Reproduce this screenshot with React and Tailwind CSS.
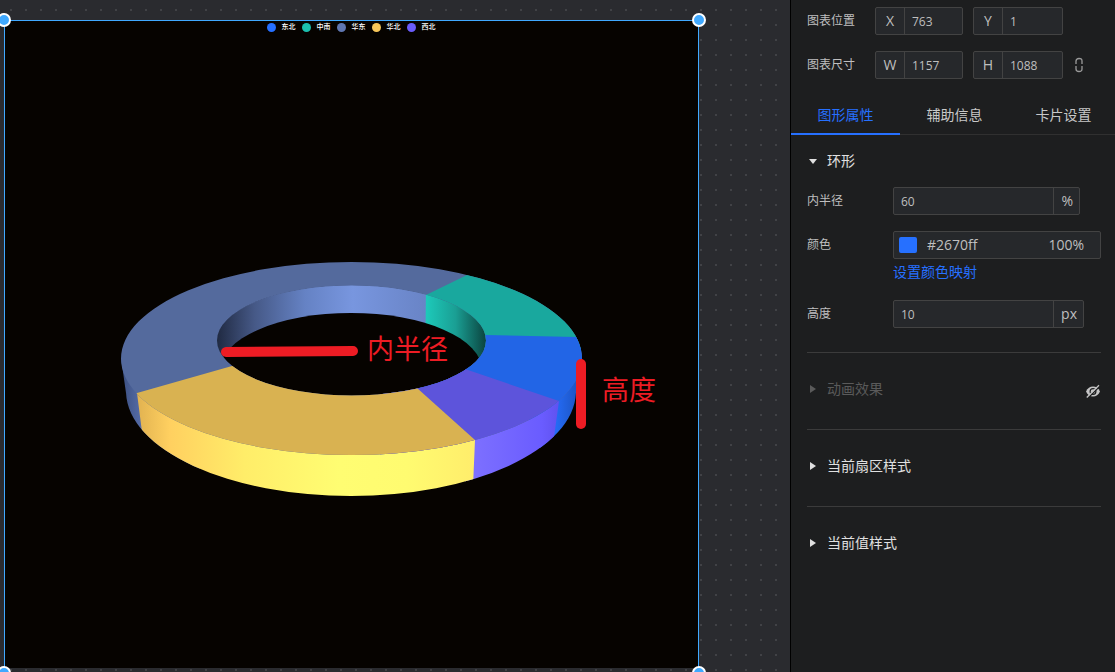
const legend = [
  { name: '东北', dot: 'bg-[#2670ff]' },
  { name: '中南', dot: 'bg-[#1bbfae]' },
  { name: '华东', dot: 'bg-[#5f76b0]' },
  { name: '华北', dot: 'bg-[#f6c659]' },
  { name: '西北', dot: 'bg-[#6a5cf9]' },
];

const tabs = ['图形属性', '辅助信息', '卡片设置'];

const RingChart = () => (
  <svg className="w-full h-auto block" viewBox="0 0 693 650" role="img" aria-label="环形图">
    <defs>
      <linearGradient id="slateOuter" gradientUnits="userSpaceOnUse" x1="121" y1="0" x2="142" y2="0">
        <stop offset="0" stopColor="#3b4f80" />
        <stop offset="1" stopColor="#566da8" />
      </linearGradient>
      <linearGradient id="yellowOuter" gradientUnits="userSpaceOnUse" x1="136" y1="0" x2="475" y2="0">
        <stop offset="0" stopColor="#e0b150" />
        <stop offset="0.1" stopColor="#ffd060" />
        <stop offset="0.32" stopColor="#ffed69" />
        <stop offset="0.6" stopColor="#fffd72" />
        <stop offset="0.8" stopColor="#fffb70" />
        <stop offset="1" stopColor="#ffed6b" />
      </linearGradient>
      <linearGradient id="purpleOuter" gradientUnits="userSpaceOnUse" x1="473" y1="0" x2="559" y2="0">
        <stop offset="0" stopColor="#7d70ff" />
        <stop offset="0.8" stopColor="#6a5cff" />
        <stop offset="1" stopColor="#6052ef" />
      </linearGradient>
      <linearGradient id="blueOuter" gradientUnits="userSpaceOnUse" x1="554" y1="0" x2="582" y2="0">
        <stop offset="0" stopColor="#256dfa" />
        <stop offset="1" stopColor="#1b50b8" />
      </linearGradient>
      <linearGradient id="slateInner" gradientUnits="userSpaceOnUse" x1="217" y1="0" x2="426" y2="0">
        <stop offset="0" stopColor="#202a42" />
        <stop offset="0.18" stopColor="#465987" />
        <stop offset="0.42" stopColor="#6582c4" />
        <stop offset="0.65" stopColor="#7896df" />
        <stop offset="1" stopColor="#6984c6" />
      </linearGradient>
      <linearGradient id="greenInner" gradientUnits="userSpaceOnUse" x1="425" y1="0" x2="486" y2="0">
        <stop offset="0" stopColor="#1dcbbb" />
        <stop offset="0.5" stopColor="#1a9f94" />
        <stop offset="1" stopColor="#0b443f" />
      </linearGradient>
      <clipPath id="ringTop">
        <path
          clipRule="evenodd"
          d="M121 358.5a230.5 96.5 0 1 0 461 0a230.5 96.5 0 1 0 -461 0Z M217 340.5a134.5 55 0 1 0 269 0a134.5 55 0 1 0 -269 0Z"
        />
      </clipPath>
      <clipPath id="ringBody">
        <ellipse cx="351" cy="391" rx="225" ry="105" />
        <path d="M121 358h461l-6 35H126Z" />
      </clipPath>
      <clipPath id="ringHole">
        <ellipse cx="351.5" cy="340.5" rx="135" ry="55.5" />
      </clipPath>
    </defs>
    <g transform="translate(-5 -21)">
      {/* outer wall, each piece running a little under the next one */}
      <g clipPath="url(#ringBody)">
        <path fill="url(#slateOuter)" d="M115 350H200V500H115Z" />
        <path fill="url(#blueOuter)" d="M540 340H595V470H540Z" />
        <path fill="url(#purpleOuter)" d="M465 400L559 401L554 437V500H465Z" />
        <path fill="url(#yellowOuter)" d="M136 385L137 393L142 432V510H472L475 440V380Z" />
      </g>
      {/* hole and inner wall */}
      <g clipPath="url(#ringHole)">
        <path fill="url(#slateInner)" d="M210 280H430V400H210Z" />
        <path fill="url(#greenInner)" d="M426 280H495V400H425Z" />
        <ellipse cx="351" cy="370" rx="131" ry="57" fill="#060300" />
      </g>
      {/* top face */}
      <g clipPath="url(#ringTop)">
        <path fill="#546a9d" d="M100 240H600V480H100Z" />
        <path fill="#19a89e" d="M491 240L467 275L426 295L380 335V350H610V240Z" />
        <path fill="#2265e6" d="M610 338L576 337L486 335H380V420H610Z" />
        <path fill="#5d54db" d="M610 422L559 401L468 370L380 340V480H610Z" />
        <path fill="#d9b251" d="M509 509L475 440L417 388L351 332L232 366L137 393L100 403V509Z" />
      </g>
      <path d="M226 352L353 351" stroke="#ed1c24" strokeWidth="10" strokeLinecap="round" />
      <path d="M581 364V424" stroke="#ed1c24" strokeWidth="10" strokeLinecap="round" />
      <g fill="#ed1c24" fontSize="27" fontFamily="'Noto Sans CJK SC', sans-serif">
        <text x="367" y="359">内半径</text>
        <text x="602" y="400">高度</text>
      </g>
    </g>
  </svg>
);

const EyeOff = () => (
  <svg className="w-4 h-4" viewBox="0 0 16 16" aria-hidden="true">
    <path d="M1 8.500C2.500 5 5 3.500 8 3.500S13.500 5 15 8.500C13.500 12 11 13.500 8 13.500S2.500 12 1 8.500Z" fill="#c4c4c4" />
    <circle cx="8" cy="8.500" r="2.900" fill="#c4c4c4" stroke="#1d1e1f" strokeWidth="1.200" />
    <path d="M3 15L15 3" stroke="#1d1e1f" strokeWidth="1.400" />
    <path d="M1.800 14.500L14 2.300" stroke="#c4c4c4" strokeWidth="1.300" />
  </svg>
);

const Handle = ({ className }) => (
  <span className={`absolute w-3.5 h-3.5 rounded-full bg-[#40a9ff] border-2 border-white ${className}`}></span>
);

const PrefixInput = ({ label, value, className }) => (
  <label className={`flex h-7 border border-[#434343] rounded-xs bg-[#26282b] ${className}`}>
    <span className="w-7 flex items-center justify-center text-sm text-[#bfbfbf]">{label}</span>
    <input
      className="flex-1 min-w-0 border-l border-[#434343] pl-[7px] pt-px text-xs text-[#bfbfbf] outline-none"
      defaultValue={value}
    />
  </label>
);

const UnitInput = ({ id, value, unit, className }) => (
  <div className={`flex h-7 border border-[#434343] rounded-xs bg-[#26282b] ${className}`}>
    <input id={id} className="flex-1 min-w-0 pl-[7px] pt-px text-xs text-[#bfbfbf] outline-none" defaultValue={value} />
    <span className="border-l border-[#434343] pl-[7px] pr-1.5 flex items-center text-sm text-[#bfbfbf]">{unit}</span>
  </div>
);

const Caret = ({ open }) => (
  <svg className="w-3 h-3" viewBox="0 0 12 12" fill="currentColor" aria-hidden="true">
    {open ? <path d="M2 4H10L6 9Z" /> : <path d="M3 2L9 6L3 10Z" />}
  </svg>
);

const Section = ({ title, muted }) => (
  <section className="h-[77px] ml-4 mr-3.5 border-t border-[#3b3b3b] flex items-center justify-between">
    <button
      type="button"
      className={`pb-1 flex items-center gap-2 text-sm leading-5 ${muted ? 'text-[#5a5a5a]' : 'text-[#e0e0e0]'}`}
    >
      <Caret />
      {title}
    </button>
    {muted && (
      <button type="button" aria-label="显示">
        <EyeOff />
      </button>
    )}
  </section>
);

export default function App() {
  return (
    <div className="h-screen flex overflow-hidden bg-[#1d1e1f] text-[#bfbfbf] font-['Open_Sans','Noto_Sans_CJK_SC',sans-serif]">
      {/* Design canvas */}
      <main className="relative flex-1 min-w-0 overflow-hidden bg-[#2a2b2f] bg-[conic-gradient(from_270deg_at_2px_2px,#414246_90deg,transparent_0)] bg-[size:15px_15px] bg-[position:10px_9px]">
        <div className="absolute left-1 top-5 w-[695px] h-[653px] border border-[#40a9ff]">
          <div className="relative h-[647px] overflow-hidden bg-[#060300]">
            <RingChart />
            <ul className="absolute top-0 inset-x-0 h-3 pr-px flex items-center justify-center gap-1.5 text-[7px] leading-3 font-medium text-white">
              {legend.map((item) => (
                <li key={item.name} className="flex items-center gap-1.5">
                  <span className={`w-[9px] h-[9px] rounded-full ${item.dot}`}></span>
                  {item.name}
                </li>
              ))}
            </ul>
          </div>
          <Handle className="-left-2 -top-2" />
          <Handle className="-right-2 -top-2" />
          <Handle className="-left-2 -bottom-2" />
          <Handle className="-right-2 -bottom-2" />
        </div>
      </main>

      {/* Property panel */}
      <aside className="w-[325px] shrink-0 border-l border-black overflow-hidden">
        <div className="pt-[7px] px-4 flex flex-col gap-4 text-xs">
          <div className="flex items-center">
            <span className="w-[68px]">图表位置</span>
            <PrefixInput label="X" value="763" className="w-[88px]" />
            <PrefixInput label="Y" value="1" className="w-[90px] ml-2.5" />
          </div>
          <div className="flex items-center">
            <span className="w-[68px]">图表尺寸</span>
            <PrefixInput label="W" value="1157" className="w-[88px]" />
            <PrefixInput label="H" value="1088" className="w-[90px] ml-2.5" />
            <button type="button" aria-label="锁定比例" className="ml-3 text-[#9a9a9a]">
              <svg className="w-2 h-4" viewBox="0 0 8 16" fill="none" stroke="currentColor" strokeWidth="1.3">
                <path d="M1 7V4Q1 1.500 4 1.500T7 4V7M1 9V12Q1 14.500 4 14.500T7 12V9" />
              </svg>
            </button>
          </div>
        </div>

        <nav className="mt-4 h-10 flex border-b border-[#303030] text-sm">
          {tabs.map((tab, i) => (
            <button
              key={tab}
              type="button"
              className={`w-[109px] shrink-0 h-10 pt-0.5 border-b-2 ${
                i === 0 ? 'border-[#2670ff] text-[#2670ff]' : 'border-transparent text-[#c8c8c8]'
              }`}
            >
              {tab}
            </button>
          ))}
        </nav>

        <div className="pt-4 pb-6 pl-4 pr-3.5">
          <button type="button" className="flex items-center gap-2 text-sm leading-5 text-[#e0e0e0]">
            <Caret open />
            环形
          </button>
          <div className="mt-4 flex items-center">
            <label htmlFor="inner" className="w-[86px] text-xs">内半径</label>
            <UnitInput id="inner" value="60" unit="%" className="w-[187px]" />
          </div>
          <div className="mt-4 flex items-center">
            <span className="w-[86px] text-xs">颜色</span>
            <button
              type="button"
              className="flex-1 h-7 border border-[#434343] rounded-xs bg-[#26282b] flex items-center pl-[5px] pr-4 text-sm"
            >
              <span className="w-[18px] h-4 rounded-xs bg-[#2670ff]"></span>
              <span className="ml-2.5">#2670ff</span>
              <span className="ml-auto">100%</span>
            </button>
          </div>
          <a href="#mapping" className="block ml-[86px] mt-[3px] mb-[18px] text-sm leading-5 text-[#2670ff]">
            设置颜色映射
          </a>
          <div className="flex items-center">
            <label htmlFor="height" className="w-[86px] text-xs">高度</label>
            <UnitInput id="height" value="10" unit="px" className="w-[191px]" />
          </div>
        </div>

        <Section title="动画效果" muted />
        <Section title="当前扇区样式" />
        <Section title="当前值样式" />
      </aside>
    </div>
  );
}
